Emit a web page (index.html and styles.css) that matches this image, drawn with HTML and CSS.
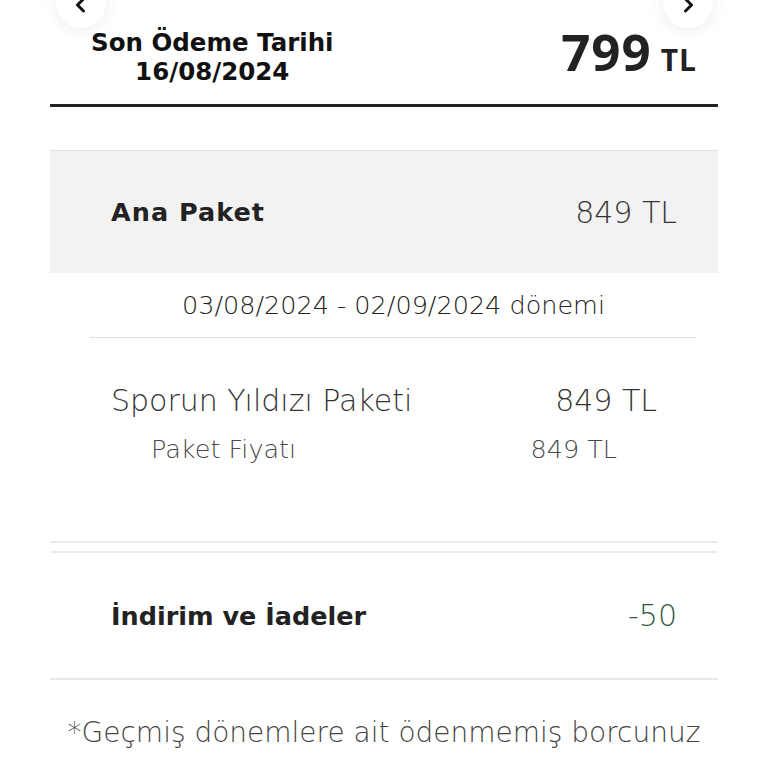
FILE: index.html
```html
<!DOCTYPE html>
<html lang="tr">
<head>
    <meta charset="UTF-8" />
    <meta name="viewport" content="width=device-width, initial-scale=1.0"/>
    <title>Fatura Detayı</title>
    <link rel="stylesheet" href="styles.css">
</head>
<body>

<!-- Month switcher -->
<div class="nav">
    <button class="nav-btn" aria-label="Önceki">
        <svg width="18" height="18" viewBox="0 0 18 18"><path d="M11.5 3 L5.5 9 L11.5 15" fill="none" stroke="#111" stroke-width="3" stroke-linecap="round" stroke-linejoin="round"/></svg>
    </button>
    <button class="nav-btn" aria-label="Sonraki">
        <svg width="18" height="18" viewBox="0 0 18 18"><path d="M6.5 3 L12.5 9 L6.5 15" fill="none" stroke="#111" stroke-width="3" stroke-linecap="round" stroke-linejoin="round"/></svg>
    </button>
</div>

<div class="summary">
    <div class="due">
        <div>Son Ödeme Tarihi</div>
        <div>16/08/2024</div>
    </div>
    <div class="total"><span class="amount">799</span> <span class="currency">TL</span></div>
</div>

<div class="section-head">
    <span class="label-bold main-label">Ana Paket</span>
    <span class="price">849 TL</span>
</div>

<div class="period">03/08/2024 - 02/09/2024 dönemi</div>

<div class="pack">
    <div class="pack-row">
        <span>Sporun Yıldızı Paketi</span>
        <span>849 TL</span>
    </div>
    <div class="pack-sub">
        <span>Paket Fiyatı</span>
        <span>849 TL</span>
    </div>
</div>

<div class="divider"></div>

<div class="discount">
    <span class="label-bold">İndirim ve İadeler</span>
    <span class="minus">-50</span>
</div>

<p class="note">*Geçmiş dönemlere ait ödenmemiş borcunuz</p>

</body>
</html>
```

FILE: styles.css
```css
body {
    font-family: "DejaVu Sans", sans-serif;
    margin: 0;
    background: #fff;
    color: #222;
    overflow: hidden;
}
.nav {
    display: flex;
    justify-content: space-between;
    padding: 0 55px 0 56px;
    margin-top: -22px;
    height: 50px;
}
.nav-btn {
    width: 50px;
    height: 50px;
    border-radius: 50%;
    border: none;
    background: #fff;
    box-shadow: 0 2px 16px rgba(0, 0, 0, 0.08);
    display: flex;
    align-items: flex-end;
    justify-content: center;
    padding: 0 0 14px;
}
.summary {
    display: flex;
    justify-content: space-between;
    align-items: center;
    margin: 0 50px;
    padding: 0 21px 18px 41px;
    border-bottom: 3px solid #222;
    height: 79px;
    box-sizing: border-box;
}
.due {
    text-align: center;
    font-weight: 700;
    font-size: 24.5px;
    line-height: 29px;
    color: #111;
}
.total {
    font-family: "Open Sans", sans-serif;
    font-weight: 700;
    color: #222;
    display: flex;
    align-items: baseline;
    gap: 9px;
    padding-bottom: 12px;
}
.amount {
    font-size: 51px;
    letter-spacing: 1px;
}
.currency {
    font-size: 30px;
    letter-spacing: 1px;
}
.section-head {
    display: flex;
    justify-content: space-between;
    align-items: center;
    margin: 43px 50px 0;
    height: 123px;
    padding: 0 41px 0 61px;
    background: #f2f2f2;
    border-top: 1px solid #e3e3e3;
    box-sizing: border-box;
}
.label-bold {
    font-weight: 700;
    font-size: 25.5px;
    color: #222;
}
.main-label {
    letter-spacing: 1px;
}
.price, .period, .pack-row, .pack-sub, .minus, .note {
    font-weight: 200;
}
.price {
    font-size: 30px;
    color: #333;
}
.period {
    margin: 0 71px 0 90px;
    height: 65px;
    border-bottom: 1px solid #e2e2e2;
    display: flex;
    align-items: center;
    justify-content: center;
    font-size: 25.5px;
    color: #222;
    box-sizing: border-box;
}
.pack {
    padding: 40px 0 0;
    height: 205px;
    margin: 0 50px;
    border-bottom: 2px solid #ececec;
    box-sizing: border-box;
}
.pack-row {
    display: flex;
    justify-content: space-between;
    padding: 0 61px 0 61px;
    font-size: 30px;
    color: #333;
    line-height: 46px;
}
.pack-sub {
    display: flex;
    justify-content: space-between;
    padding: 0 101px 0 101px;
    font-size: 25.5px;
    color: #4a4a4a;
    line-height: 50px;
}
.divider {
    margin: 8px 50px 0;
    border-top: 2px solid #ececec;
}
.discount {
    display: flex;
    justify-content: space-between;
    align-items: center;
    margin: 0 50px;
    padding: 0 41px 0 61px;
    height: 127px;
    border-bottom: 2px solid #e8e8e8;
    box-sizing: border-box;
}
.minus {
    font-size: 30px;
    color: #2f5a45;
}
.note {
    margin: 36px 0 0;
    text-align: center;
    font-size: 28px;
    color: #444;
}
```
